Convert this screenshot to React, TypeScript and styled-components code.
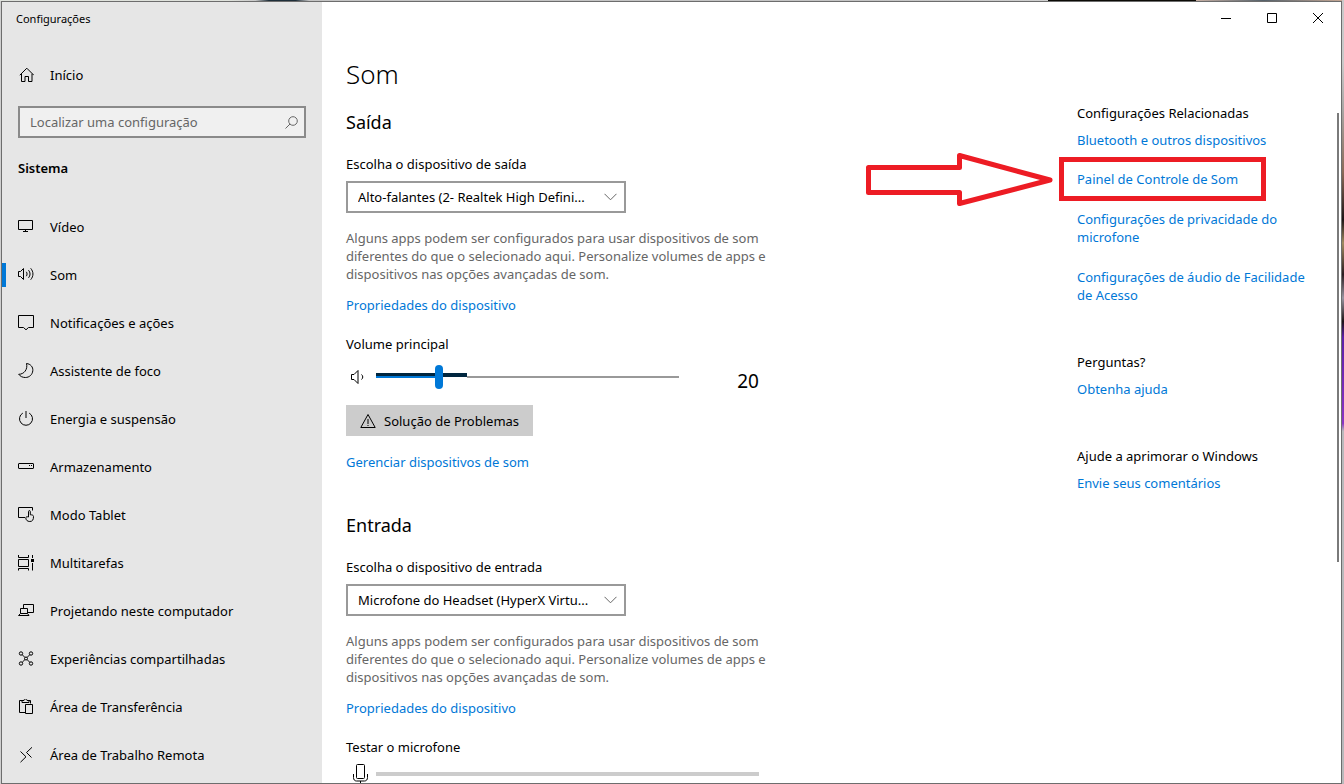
import React from "react";
import styled, { createGlobalStyle, css } from "styled-components";

const Global = createGlobalStyle`
  * { box-sizing: border-box; }
  body { margin: 0; background: #cfcfcf; }
  body, button, input, select {
    font-family: "Noto Sans", "Open Sans", sans-serif;
    font-size: 13px;
    line-height: 18px;
    color: #000;
  }
  h1, h2, h3, p, ul { margin: 0; padding: 0; font-weight: 400; }
  ul { list-style: none; }
`;

const Desktop = styled.div`
  height: 100vh;
  padding: 1px 2px 0 1px;
  background:
    linear-gradient(180deg, #c9c9c9 0 8%, #a9a6a4 14%, #8a6a58 22%, #1d1416 28%, #a08a60 31%, #2a1c20 35%, #9a94a0 38%, #1d1416 41%, #5c1fa8 43%, #8a35c4 54%, #b9b9bb 55%) right / 2px 100% no-repeat,
    linear-gradient(90deg, #dfe2dc 0 17%, #c9c9c9 19%, #1f2f3a 20% 22%, #c4c4c4 23% 65%, #cfcfcf 78%, #0c0a06 78% 89%, #c8b0a4 89%, #55616a 94%, #c9a995) top / 100% 1px no-repeat,
    #cfcfcf;
`;

const Window = styled.div`
  display: flex;
  height: 100%;
  overflow: hidden;
  border: 1px solid #6d6d6d;
  background: #fff;
`;

const Sidebar = styled.nav`
  flex: 0 0 320px;
  display: flex;
  flex-direction: column;
  background: #e6e6e6;
  overflow: hidden;
`;

const AppTitle = styled.div`
  flex: none;
  padding: 8px 14px;
  font-size: 11px;
  line-height: 18px;
  height: 49px;
`;

const navRow = css`
  display: flex;
  align-items: center;
  gap: 16px;
  height: 48px;
  padding: 0 16px;
  color: #000;
  text-decoration: none;
`;

const HomeLink = styled.a`
  ${navRow}
  flex: none;
`;

const NavLink = styled.a<{ $active?: boolean }>`
  ${navRow}
  background: ${(p) => (p.$active ? "linear-gradient(#0078d7, #0078d7) left / 4px 24px no-repeat" : "none")};
`;

const SearchBox = styled.label`
  flex: none;
  display: flex;
  align-items: center;
  height: 32px;
  margin: 7px 16px 0;
  padding: 0 6px 0 10px;
  border: 2px solid #8a8a8a;
  background: #f0f0f0;
`;

const SearchInput = styled.input`
  flex: 1;
  min-width: 0;
  padding: 0;
  border: 0;
  outline: 0;
  background: none;
  &::placeholder { color: #666; opacity: 1; }
`;

const NavHeading = styled.h2`
  && {
    flex: none;
    padding: 21px 16px 26px;
    font-size: 13px;
    font-weight: 600;
    line-height: 18px;
  }
`;

const Main = styled.div`
  flex: 1;
  min-width: 0;
  display: flex;
  flex-direction: column;
`;

const TitleBar = styled.div`
  flex: none;
  display: flex;
  justify-content: flex-end;
`;

const CaptionButton = styled.button`
  display: flex;
  align-items: center;
  justify-content: center;
  width: 46px;
  height: 32px;
  padding: 0;
  border: 0;
  background: none;
`;

const Body = styled.div`
  flex: 1;
  min-height: 0;
  display: flex;
  overflow: hidden;
`;

const Content = styled.main`
  flex: 1;
  min-width: 0;
  padding: 22px 24px 0;
`;

const PageTitle = styled.h1`
  && {
    font-size: 26px;
    font-weight: 300;
    line-height: 36px;
  }
`;

const Section = styled.section`
  display: flex;
  flex-direction: column;
  align-items: flex-start;
  padding: 16px 0 24px;
`;

const SectionTitle = styled.h2`
  font-size: 18px;
  line-height: 28px;
`;

const Label = styled.label<{ $gap: number }>`
  && {
    margin-top: ${(p) => p.$gap}px;
  }
`;

const Picker = styled.div`
  position: relative;
  margin-top: 8px;
  width: 280px;
`;

const Select = styled.select`
  display: block;
  width: 100%;
  height: 32px;
  padding: 0 28px 0 10px;
  border: 2px solid #999;
  border-radius: 0;
  background: #fff;
  appearance: none;
`;

const PickerArrow = styled.svg`
  position: absolute;
  right: 9px;
  top: 12px;
  pointer-events: none;
`;

const Hint = styled.p`
  && {
    max-width: 440px;
    margin-top: 16px;
    color: #666;
  }
`;

const Link = styled.a<{ $gap: number }>`
  display: block;
  margin-top: ${(p) => p.$gap}px;
  color: #0078d7;
  text-decoration: none;
`;

const LevelRow = styled.div<{ $gap: number }>`
  display: flex;
  align-items: center;
  width: 413px;
  height: 32px;
  margin-top: ${(p) => p.$gap}px;
  gap: 8px;
`;

const IconCell = styled.span`
  flex: 0 0 22px;
  display: flex;
  justify-content: center;
`;

const SliderBox = styled.div`
  position: relative;
  flex: 0 0 303px;
  height: 24px;
`;

const PeakMeter = styled.div`
  position: absolute;
  left: 0;
  top: 8px;
  width: 30%;
  height: 4px;
  background: #00263f;
`;

const Slider = styled.input`
  position: absolute;
  inset: 0;
  width: 100%;
  height: 24px;
  margin: 0;
  appearance: none;
  background: linear-gradient(90deg, #0078d7 0 20%, transparent 20% 30%, #999 30%) left 11px / 100% 2px no-repeat;
  &::-webkit-slider-thumb {
    appearance: none;
    width: 8px;
    height: 24px;
    border-radius: 4px;
    background: #0078d7;
  }
`;

const Value = styled.output`
  flex: 1;
  text-align: right;
  font-size: 19px;
  line-height: 24px;
  padding-top: 8px;
`;

const ToolButton = styled.button`
  display: flex;
  align-items: center;
  gap: 8px;
  height: 31px;
  margin-top: 12px;
  padding: 0 14px;
  border: 0;
  background: #ccc;
`;

const MicLevel = styled.div`
  flex: 1;
  height: 4px;
  background: #ccc;
`;

const Related = styled.aside`
  flex: 0 0 240px;
  padding-top: 70px;
`;

const AsideTitle = styled.h3<{ $gap?: number }>`
  && {
    margin-top: ${(p) => p.$gap ?? 0}px;
    font-size: 13px;
    line-height: 18px;
  }
`;

const Marked = styled.div`
  position: relative;
`;

const MarkBox = styled.span`
  position: absolute;
  left: -18px;
  top: -13px;
  width: 207px;
  height: 44px;
  border: 5px solid #ed1c24;
  pointer-events: none;
`;

const MarkArrow = styled.svg`
  position: absolute;
  left: -212px;
  top: -18px;
  pointer-events: none;
`;

const ScrollRail = styled.div`
  flex: 0 0 24px;
  padding: 79px 2px 0 0;
  display: flex;
  justify-content: flex-end;
`;

const ScrollThumb = styled.div`
  width: 2px;
  height: 67%;
  background: #7a7a7a;
`;

const Glyph = ({ children, size = 16 }: { children: React.ReactNode; size?: number }) => (
  <svg width={size} height={size} viewBox="0 0 16 16" fill="none" stroke="#000" strokeWidth="1" aria-hidden="true">
    {children}
  </svg>
);

const icons = {
  home: <path d="M1.800 8.200 8.800 1.200l7 7M3.500 6.800v7.700h3.500v-5h3.500v5h3.500V6.800" />,
  video: <path d="M.5 1.500h14v9H.5zM7.500 10.500v2M5 12.500h5" />,
  sound: (
    <>
      <path d="M.5 4.500h2l3-3v11l-3-3h-2z" />
      <path d="M8.300 4.800c1 1.400 1 3 0 4.400M10.500 3.200c2 2.400 2 5.200 0 7.600M12.700 1.300c3 3.600 3 7.800 0 11.400" />
    </>
  ),
  message: <path d="M.5.500h15v12h-5l-2.500 2.300-2.500-2.300h-5z" />,
  moon: <path d="M8.500.5c4 .4 6.700 3.500 6.300 7.200-.4 4-3.500 6.800-7.400 6.800-2.800 0-5-1-6.700-3.200C6 11.300 10 6.500 8.500.5z" />,
  power: <path d="M8 0v7M4.800 2.100a6.500 6.500 0 1 0 6.400 0" />,
  storage: (
    <>
      <rect x=".5" y="4.500" width="15" height="5" rx=".5" />
      <path d="M11 6.500h1M13 6.500h1" />
    </>
  ),
  tablet: (
    <>
      <path d="M7 10.500H.5v-10h14v3" />
      <path d="M10.500 10V4.500c0-1.200 1.800-1.200 1.800 0v3.300c1.700 0 3.200.3 3.200 1.700 0 3-.8 5-3.700 5-2.600 0-4-1.700-4-3.600 0-1 1-1.400 2.700-.9z" />
    </>
  ),
  multi: (
    <>
      <path d="M.5 0v2.500h10V0M.5 4.500h10v7H.5zM.5 15.500v-2h10v2M14.500 0v3M14.500 8v7.500" />
      <rect x="13.500" y="4.500" width="2" height="2" fill="#000" />
    </>
  ),
  project: <path d="M5.500 5.500v-4h10v8h-5.500M2.500 5.500h7v5h-7zM.5 12.500h10.500M2.500 10.500l-2 2M9.500 10.500l1.500 2" />,
  share: (
    <>
      <circle cx="3" cy="2.500" r="1.700" />
      <circle cx="13" cy="2.500" r="1.700" />
      <circle cx="3" cy="12.500" r="1.700" />
      <circle cx="13" cy="12.500" r="1.700" />
      <circle cx="8" cy="7.500" r="1.500" />
      <path d="M4.200 3.700 7 6.500M11.800 3.700 9 6.500M4.200 11.300 7 8.500M11.800 11.300 9 8.500" />
    </>
  ),
  clipboard: (
    <>
      <path d="M7 13.500H1.500v-12h2.500M10.500 1.500h2v3M4 3.500v-2h2C6-.5 9-.5 9 1.500h2v2z" />
      <path d="M7.500 5.500h7v9h-7z" />
    </>
  ),
  remote: <path d="M2.500 4.500 8 9.800 2.500 15.200M14 .3 8.500 5.500l5 5" />,
};

const navItems: { icon: keyof typeof icons; label: string; active?: boolean }[] = [
  { icon: "video", label: "Vídeo" },
  { icon: "sound", label: "Som", active: true },
  { icon: "message", label: "Notificações e ações" },
  { icon: "moon", label: "Assistente de foco" },
  { icon: "power", label: "Energia e suspensão" },
  { icon: "storage", label: "Armazenamento" },
  { icon: "tablet", label: "Modo Tablet" },
  { icon: "multi", label: "Multitarefas" },
  { icon: "project", label: "Projetando neste computador" },
  { icon: "share", label: "Experiências compartilhadas" },
  { icon: "clipboard", label: "Área de Transferência" },
  { icon: "remote", label: "Área de Trabalho Remota" },
];

const DevicePicker = ({ id, label, value }: { id: string; label: string; value: string }) => (
  <>
    <Label htmlFor={id} $gap={19}>{label}</Label>
    <Picker>
      <Select id={id}>
        <option>{value}</option>
      </Select>
      <PickerArrow width="13" height="8" viewBox="0 0 13 8" fill="none" stroke="#666">
        <path d="M.5 .8l6 6 6-6" />
      </PickerArrow>
    </Picker>
    <Hint>
      Alguns apps podem ser configurados para usar dispositivos de som diferentes do que o selecionado aqui.
      Personalize volumes de apps e dispositivos nas opções avançadas de som.
    </Hint>
    <Link href="#" $gap={13}>Propriedades do dispositivo</Link>
  </>
);

export default function App() {
  return (
    <>
      <Global />
      <Desktop>
        <Window>
          <Sidebar>
            <AppTitle>Configurações</AppTitle>
            <HomeLink href="#">
              <Glyph>{icons.home}</Glyph>
              Início
            </HomeLink>
            <SearchBox>
              <SearchInput type="text" placeholder="Localizar uma configuração" aria-label="Localizar uma configuração" />
              <svg width="13" height="13" viewBox="0 0 13 13" fill="none" stroke="#666" aria-hidden="true">
                <circle cx="8" cy="5" r="4.300" />
                <path d="M5 8 .5 12.500" />
              </svg>
            </SearchBox>
            <NavHeading>Sistema</NavHeading>
            <ul>
              {navItems.map((item) => (
                <li key={item.label}>
                  <NavLink href="#" $active={item.active}>
                    <Glyph>{icons[item.icon]}</Glyph>
                    {item.label}
                  </NavLink>
                </li>
              ))}
            </ul>
          </Sidebar>
          <Main>
            <TitleBar>
              <CaptionButton aria-label="Minimizar">
                <svg width="10" height="10" stroke="#000"><path d="M0 5.500h10" /></svg>
              </CaptionButton>
              <CaptionButton aria-label="Maximizar">
                <svg width="10" height="10" stroke="#000" fill="none"><path d="M.5 .5h9v9h-9z" /></svg>
              </CaptionButton>
              <CaptionButton aria-label="Fechar">
                <svg width="10" height="10" stroke="#000"><path d="M0 0l10 10M10 0L0 10" /></svg>
              </CaptionButton>
            </TitleBar>
            <Body>
              <Content>
                <PageTitle>Som</PageTitle>
                <Section>
                  <SectionTitle>Saída</SectionTitle>
                  <DevicePicker
                    id="output"
                    label="Escolha o dispositivo de saída"
                    value="Alto-falantes (2- Realtek High Defini..."
                  />
                  <Label htmlFor="volume" $gap={21}>Volume principal</Label>
                  <LevelRow $gap={8}>
                    <IconCell>
                      <Glyph>
                        <path d="M2.500 5.500h2.500l4-4v13l-4-4h-2.500z" />
                        <path d="M12.500 5.500c1.700 1.500 1.700 3.500 0 5" />
                      </Glyph>
                    </IconCell>
                    <SliderBox>
                      <PeakMeter />
                      <Slider id="volume" type="range" min={0} max={100} defaultValue={20} />
                    </SliderBox>
                    <Value htmlFor="volume">20</Value>
                  </LevelRow>
                  <ToolButton>
                    <Glyph>
                      <path d="M8 1.500 15.200 14.500H.8zM8 6v5M8 12v1" />
                    </Glyph>
                    Solução de Problemas
                  </ToolButton>
                  <Link href="#" $gap={17}>Gerenciar dispositivos de som</Link>
                </Section>
                <Section>
                  <SectionTitle>Entrada</SectionTitle>
                  <DevicePicker
                    id="input"
                    label="Escolha o dispositivo de entrada"
                    value="Microfone do Headset (HyperX Virtu..."
                  />
                  <Label as="p" $gap={21}>Testar o microfone</Label>
                  <LevelRow $gap={2}>
                    <IconCell>
                      <svg width="22" height="20" viewBox="0 0 22 20" fill="none" stroke="#000" aria-hidden="true">
                        <rect x="10.500" y=".5" width="8" height="14" rx="1" />
                        <path d="M7.500 10v3.500c0 2 1 3.500 3 3.500h8c2 0 3-1.500 3-3.500V10M14.500 17v3" />
                      </svg>
                    </IconCell>
                    <MicLevel />
                  </LevelRow>
                </Section>
              </Content>
              <Related>
                <AsideTitle>Configurações Relacionadas</AsideTitle>
                <Link href="#" $gap={9}>Bluetooth e outros dispositivos</Link>
                <Marked>
                  <Link href="#" $gap={21}>Painel de Controle de Som</Link>
                  <MarkBox />
                  <MarkArrow width="190" height="56" viewBox="0 0 190 56" fill="none" stroke="#ed1c24" strokeWidth="5" strokeLinejoin="round">
                    <path d="M3.500 15.500h91v-12L185 28 94.500 51.500v-11h-91z" />
                  </MarkArrow>
                </Marked>
                <Link href="#" $gap={22}>Configurações de privacidade do microfone</Link>
                <Link href="#" $gap={22}>Configurações de áudio de Facilidade de Acesso</Link>
                <AsideTitle $gap={49}>Perguntas?</AsideTitle>
                <Link href="#" $gap={9}>Obtenha ajuda</Link>
                <AsideTitle $gap={49}>Ajude a aprimorar o Windows</AsideTitle>
                <Link href="#" $gap={9}>Envie seus comentários</Link>
              </Related>
              <ScrollRail>
                <ScrollThumb />
              </ScrollRail>
            </Body>
          </Main>
        </Window>
      </Desktop>
    </>
  );
}
